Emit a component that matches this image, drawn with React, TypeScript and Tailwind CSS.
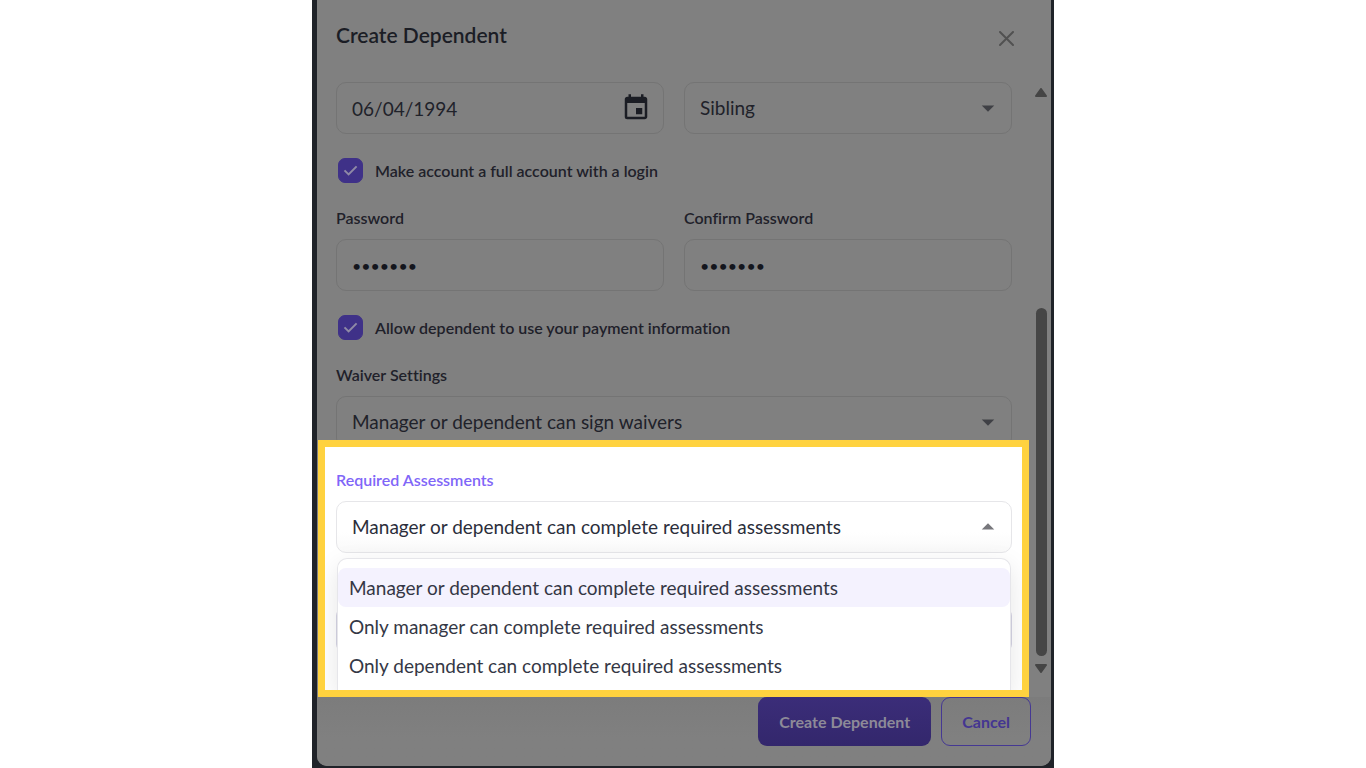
import { useState } from "react";
import type { ReactNode } from "react";
import { MdArrowDropDown, MdArrowDropUp, MdEvent } from "react-icons/md";

const fieldBox =
  "h-[52px] w-full appearance-none rounded-[10px] border border-[#747474] bg-transparent px-[15px] text-[19px] text-[#20222a] outline-none";

const passwordBox =
  "h-[52px] w-full appearance-none rounded-[10px] border border-[#747474] bg-transparent px-[15px] text-[16px] text-[#14161d] outline-none";

function Field({ id, label, children }: { id: string; label: string; children: ReactNode }) {
  return (
    <div className="flex min-w-0 flex-1 flex-col gap-[10px]">
      <label htmlFor={id} className="text-[16px] leading-[22px] font-semibold text-[#1f212a]">
        {label}
      </label>
      {children}
    </div>
  );
}

function Check({ id, label }: { id: string; label: string }) {
  return (
    <div className="flex h-[25px] items-center gap-3 pl-[2px]">
      <span className="relative flex size-[25px] shrink-0">
        <input
          id={id}
          type="checkbox"
          defaultChecked
          className="peer size-[25px] appearance-none rounded-[7px] border border-[#3f3188] checked:bg-[#3f3188]"
        />
        <svg
          viewBox="0 0 25 25"
          aria-hidden="true"
          className="pointer-events-none absolute inset-0 hidden size-[25px] peer-checked:block"
        >
          <path d="M6.5 12.4l4.1 4 8-8" fill="none" stroke="#8f8aa6" strokeWidth="2" />
        </svg>
      </span>
      <label htmlFor={id} className="text-[16px] leading-[22px] font-semibold text-[#1f212a]">
        {label}
      </label>
    </div>
  );
}

const assessmentOptions = [
  "Manager or dependent can complete required assessments",
  "Only manager can complete required assessments",
  "Only dependent can complete required assessments",
];

export default function App() {
  const [assessment, setAssessment] = useState(assessmentOptions[0]);

  return (
    <div className="min-h-screen bg-white font-['Lato',sans-serif] [font-variant-ligatures:none]">
      <div className="mx-auto w-full max-w-[742px] bg-[#202329] pr-[3px] pb-[2px] pl-[5px]">
        <form className="rounded-b-[10px] bg-[#808080]" onSubmit={(e) => e.preventDefault()}>
          <header className="flex h-[82px] items-start justify-between pt-[21px] pr-[37px] pl-[19px]">
            <h1 className="text-[21px] leading-[28px] font-semibold text-[#1b1d25]">Create Dependent</h1>
            <button type="button" aria-label="Close" className="mt-[10px] text-[#515151]">
              <svg viewBox="0 0 15 15" className="size-[15px]" aria-hidden="true">
                <path d="M1 1l13 13M14 1L1 14" stroke="currentColor" strokeWidth="2" strokeLinecap="round" />
              </svg>
            </button>
          </header>

          <div className="flex">
            <div className="min-w-0 flex-1">
              <div className="flex flex-col gap-6 pr-[17px] pl-[19px]">
                <div className="flex gap-5">
                  <div className="relative flex-1">
                    <input aria-label="Date of birth" type="text" defaultValue="06/04/1994" className={fieldBox} />
                    <button
                      type="button"
                      aria-label="Choose date"
                      className="absolute top-[11px] right-[13px] text-[#1b1d24]"
                    >
                      <MdEvent className="size-[30px]" />
                    </button>
                  </div>
                  <div className="relative flex-1">
                    <select aria-label="Relationship" className={fieldBox}>
                      <option>Sibling</option>
                    </select>
                    <MdArrowDropDown className="pointer-events-none absolute top-[11px] right-[9px] size-[30px] text-[#3f4045]" />
                  </div>
                </div>

                <Check id="full-account" label="Make account a full account with a login" />

                <div className="flex gap-5">
                  <Field id="password" label="Password">
                    <input id="password" type="password" defaultValue="depend1" className={passwordBox} />
                  </Field>
                  <Field id="confirm" label="Confirm Password">
                    <input id="confirm" type="password" defaultValue="depend1" className={passwordBox} />
                  </Field>
                </div>

                <Check id="payment" label="Allow dependent to use your payment information" />

                <Field id="waiver" label="Waiver Settings">
                  <div className="relative h-[44px] overflow-hidden">
                    <select id="waiver" className={fieldBox}>
                      <option>Manager or dependent can sign waivers</option>
                    </select>
                    <MdArrowDropDown className="pointer-events-none absolute top-[11px] right-[9px] size-[30px] text-[#3f4045]" />
                  </div>
                </Field>
              </div>

              <section className="ml-px overflow-hidden border-[7px] border-[#ffd23f] bg-white pt-[22px] pr-[10px] pl-[11px]">
                <label
                  htmlFor="assessments"
                  className="mb-[10px] block text-[16px] leading-[22px] font-semibold text-[#8066f8]"
                >
                  Required Assessments
                </label>
                <div className="relative">
                  <select
                    id="assessments"
                    value={assessment}
                    onChange={(e) => setAssessment(e.target.value)}
                    className="h-[52px] w-full appearance-none rounded-[10px] border border-[#e6e6e9] bg-linear-to-b from-white from-60% to-[#f9f9f9] px-[15px] text-[19px] text-[#2b2e3b] outline-none"
                  >
                    {assessmentOptions.map((o) => (
                      <option key={o}>{o}</option>
                    ))}
                  </select>
                  <MdArrowDropUp className="pointer-events-none absolute top-[11px] right-[9px] size-[30px] text-[#77777c]" />
                </div>
                <div className="relative mt-[5px]">
                  <div className="absolute inset-x-0 top-[50px] h-[44px] rounded-[8px] border-x border-[#d6d4e4]" />
                  <ul
                    role="listbox"
                    aria-label="Required Assessments"
                    className="relative mx-px rounded-t-[10px] border border-b-0 border-[#e6e6ea] bg-white pt-[9px] pb-[5px] shadow-[0_8px_26px_rgba(0,0,0,0.10)]"
                  >
                    {assessmentOptions.map((o) => (
                      <li key={o} role="option" aria-selected={o === assessment}>
                        <button
                          type="button"
                          onClick={() => setAssessment(o)}
                          className={
                            o === assessment
                              ? "block h-[39px] w-full rounded-[8px] bg-[#f4f2fe] px-[11px] pt-px text-left text-[19px] text-[#343745]"
                              : "block h-[39px] w-full rounded-[8px] px-[11px] pt-px text-left text-[19px] text-[#343745]"
                          }
                        >
                          {o}
                        </button>
                      </li>
                    ))}
                  </ul>
                </div>
              </section>
            </div>

            <div aria-hidden="true" className="flex w-[22px] flex-col items-center pt-[6px] pb-[24px] pl-[2px]">
              <svg viewBox="0 0 12 9" className="h-[9px] w-3">
                <path d="M6 1l5 7H1z" fill="#454545" stroke="#454545" strokeLinejoin="round" strokeWidth="2" />
              </svg>
              <div className="flex-[211]" />
              <div className="w-[11px] flex-[347] rounded-full bg-[#464646]" />
              <svg viewBox="0 0 12 9" className="mt-2 h-[9px] w-3">
                <path d="M6 8l5-7H1z" fill="#454545" stroke="#454545" strokeLinejoin="round" strokeWidth="2" />
              </svg>
            </div>
          </div>

          <footer className="flex justify-end gap-[10px] rounded-b-[10px] bg-linear-to-b from-[#7c7c7c] to-[#808080] to-60% pr-5 pb-5">
            <button
              type="submit"
              className="h-[49px] rounded-[9px] bg-linear-to-b from-[#3b2d79] to-[#33276c] px-[21px] text-[16px] font-bold text-[#8d8a98]"
            >
              Create Dependent
            </button>
            <button
              type="button"
              className="h-[49px] rounded-[9px] border border-[#453893] px-5 text-[16px] font-bold text-[#443691]"
            >
              Cancel
            </button>
          </footer>
        </form>
      </div>
    </div>
  );
}
